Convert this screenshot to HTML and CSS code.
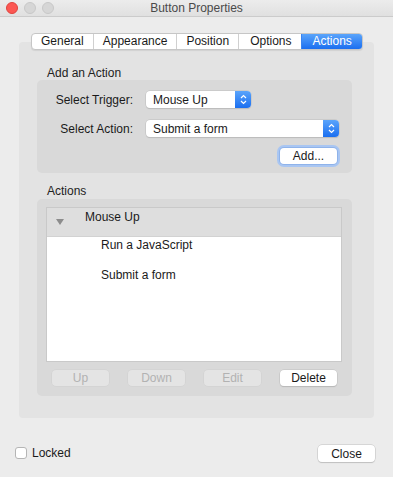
FILE: index.html
```html
<!DOCTYPE html>
<html lang="en">
<head>
    <meta charset="UTF-8">
    <meta name="viewport" content="width=device-width, initial-scale=1.0">
    <title>Button Properties</title>
    <link rel="stylesheet" href="styles.css">
</head>
<body>
    <div class="window">
        <div class="titlebar">
            <div class="lights">
                <span class="light red"></span>
                <span class="light"></span>
                <span class="light"></span>
            </div>
            <div class="title">Button Properties</div>
            <div></div>
        </div>

        <div class="tabs">
            <div class="tab">General</div>
            <div class="tab">Appearance</div>
            <div class="tab">Position</div>
            <div class="tab options">Options</div>
            <div class="tab active">Actions</div>
        </div>

        <div class="tabbox">
            <div class="section-title">Add an Action</div>
            <div class="panel add-panel">
                <div class="form-row">
                    <label class="form-label">Select Trigger:</label>
                    <div class="popup trigger">
                        <span>Mouse Up</span>
                        <span class="popup-arrows">
                            <svg width="7" height="11" viewBox="0 0 7 11"><path d="M1 4 L3.5 1.5 L6 4 M1 7 L3.5 9.5 L6 7" fill="none" stroke="#fff" stroke-width="1.2"/></svg>
                        </span>
                    </div>
                </div>
                <div class="form-row">
                    <label class="form-label">Select Action:</label>
                    <div class="popup action">
                        <span>Submit a form</span>
                        <span class="popup-arrows">
                            <svg width="7" height="11" viewBox="0 0 7 11"><path d="M1 4 L3.5 1.5 L6 4 M1 7 L3.5 9.5 L6 7" fill="none" stroke="#fff" stroke-width="1.2"/></svg>
                        </span>
                    </div>
                </div>
                <div class="add-row">
                    <button class="btn focused">Add...</button>
                </div>
            </div>

            <div class="section-title actions-title">Actions</div>
            <div class="panel list-panel">
                <div class="list">
                    <div class="list-head">
                        <span class="disclosure"></span>
                        <span>Mouse Up</span>
                    </div>
                    <div class="list-item">Run a JavaScript</div>
                    <div class="list-item">Submit a form</div>
                </div>
                <div class="list-buttons">
                    <button class="btn" disabled>Up</button>
                    <button class="btn" disabled>Down</button>
                    <button class="btn" disabled>Edit</button>
                    <button class="btn">Delete</button>
                </div>
            </div>
        </div>

        <div class="footer">
            <label class="check">
                <span class="checkbox"></span>
                Locked
            </label>
            <button class="btn close-btn">Close</button>
        </div>
    </div>
</body>
</html>
```

FILE: styles.css
```css
* {
    margin: 0;
    padding: 0;
    box-sizing: border-box;
}

body {
    font-family: "Liberation Sans", Arial, sans-serif;
    font-size: 12px;
    color: #1a1a1a;
    background: #ececec;
}

.window {
    width: 393px;
    height: 477px;
    background: #ececec;
    overflow: hidden;
}

/* title bar */
.titlebar {
    height: 17px;
    display: grid;
    grid-template-columns: 1fr auto 1fr;
    align-items: center;
    background: linear-gradient(#ececec, #e0e0e0);
    border-bottom: 1px solid #cbcbcb;
}

.lights {
    display: flex;
    gap: 6px;
    padding-left: 6px;
}

.light {
    width: 12px;
    height: 12px;
    border-radius: 50%;
    background: #d6d6d6;
    border: 1px solid #c8c8c8;
}

.light.red {
    background: #fc5753;
    border-color: #e0443e;
}

.title {
    color: #4a4a4a;
    font-size: 12px;
    line-height: 16px;
}

/* tabs */
.tabs {
    position: relative;
    z-index: 1;
    display: flex;
    width: max-content;
    margin: 16px 0 -8px 31px;
    height: 17px;
    background: #fff;
    border: 1px solid #c6c6c6;
    border-radius: 4px;
    box-shadow: 0 1px 1px rgba(0,0,0,0.08);
    overflow: hidden;
}

.tab {
    padding: 0 9px;
    line-height: 15px;
    border-left: 1px solid #d0d0d0;
    color: #1a1a1a;
}

.tab:first-child {
    border-left: none;
}

.tab.options {
    padding: 0 10px 0 11px;
}

.tab.active {
    background: linear-gradient(#5aa4fb, #1b6ff0);
    color: #fff;
    border-left-color: #3a84f0;
    padding: 0 10px;
}

.tabbox {
    margin: 0 19px;
    height: 376px;
    background: #e3e3e3;
    border-radius: 4px;
    padding-top: 24px;
}

.section-title {
    margin-left: 28px;
    line-height: 14px;
    color: #222;
}

.actions-title {
    margin-top: 11px;
    margin-bottom: 1px;
}

.panel {
    margin-left: 18px;
    width: 315px;
    background: #d9d9d9;
    border-radius: 5px;
}

/* add an action */
.add-panel {
    height: 93px;
    padding-top: 11px;
}

.form-row {
    display: flex;
    align-items: center;
    height: 17px;
    margin-bottom: 12px;
}

.form-label {
    width: 96px;
    text-align: right;
    margin-right: 13px;
}

.popup {
    display: flex;
    align-items: center;
    justify-content: space-between;
    height: 17px;
    background: #fff;
    border-radius: 4px;
    box-shadow: 0 0 0 0.5px #bdbdbd, 0 1px 1px rgba(0,0,0,0.15);
    padding-left: 7px;
    overflow: hidden;
}

.popup.trigger {
    width: 105px;
}

.popup.action {
    width: 193px;
}

.popup-arrows {
    display: flex;
    align-items: center;
    justify-content: center;
    width: 16px;
    height: 17px;
    background: linear-gradient(#5aa4fb, #1b6ff0);
}

.add-row {
    display: flex;
    justify-content: flex-end;
    padding-right: 15px;
    margin-top: -1px;
}

.btn {
    font-family: "Liberation Sans", Arial, sans-serif;
    font-size: 12px;
    color: #1a1a1a;
    width: 57px;
    height: 16px;
    line-height: 14px;
    background: #fff;
    border: none;
    border-radius: 4px;
    box-shadow: 0 0 0 0.5px #c0c0c0, 0 1px 1px rgba(0,0,0,0.18);
}

.btn.focused {
    box-shadow: 0 0 0 1px #8fb3ea, 0 0 0 3px #a9c6f2;
}

.btn:disabled {
    background: #e4e4e4;
    color: #b2b2b2;
    box-shadow: 0 0 0 0.5px #cfcfcf;
}

/* actions list */
.list-panel {
    height: 197px;
    padding: 8px 10px 0 9px;
}

.list {
    height: 155px;
    background: #fff;
    border: 1px solid #c9c9c9;
}

.list-head {
    display: flex;
    align-items: flex-start;
    height: 29px;
    background: #dedede;
    border-bottom: 1px solid #d2d2d2;
    padding-top: 2px;
    line-height: 14px;
}

.disclosure {
    width: 0;
    height: 0;
    margin: 9px 21px 0 9px;
    border-left: 4px solid transparent;
    border-right: 4px solid transparent;
    border-top: 6px solid #8c8c8c;
}

.list-item {
    height: 30px;
    line-height: 14px;
    padding: 1px 0 0 54px;
}

.list-buttons {
    display: flex;
    gap: 19px;
    margin-top: 8px;
    padding-left: 6px;
}

/* footer */
.footer {
    display: flex;
    align-items: center;
    justify-content: space-between;
    margin-top: 27px;
    padding: 0 18px 0 15px;
}

.check {
    display: flex;
    align-items: center;
    gap: 5px;
    margin-top: -1px;
}

.checkbox {
    width: 12px;
    height: 12px;
    background: #fff;
    border: 1px solid #b5b5b5;
    border-radius: 3px;
}

.close-btn {
    height: 17px;
}
```
